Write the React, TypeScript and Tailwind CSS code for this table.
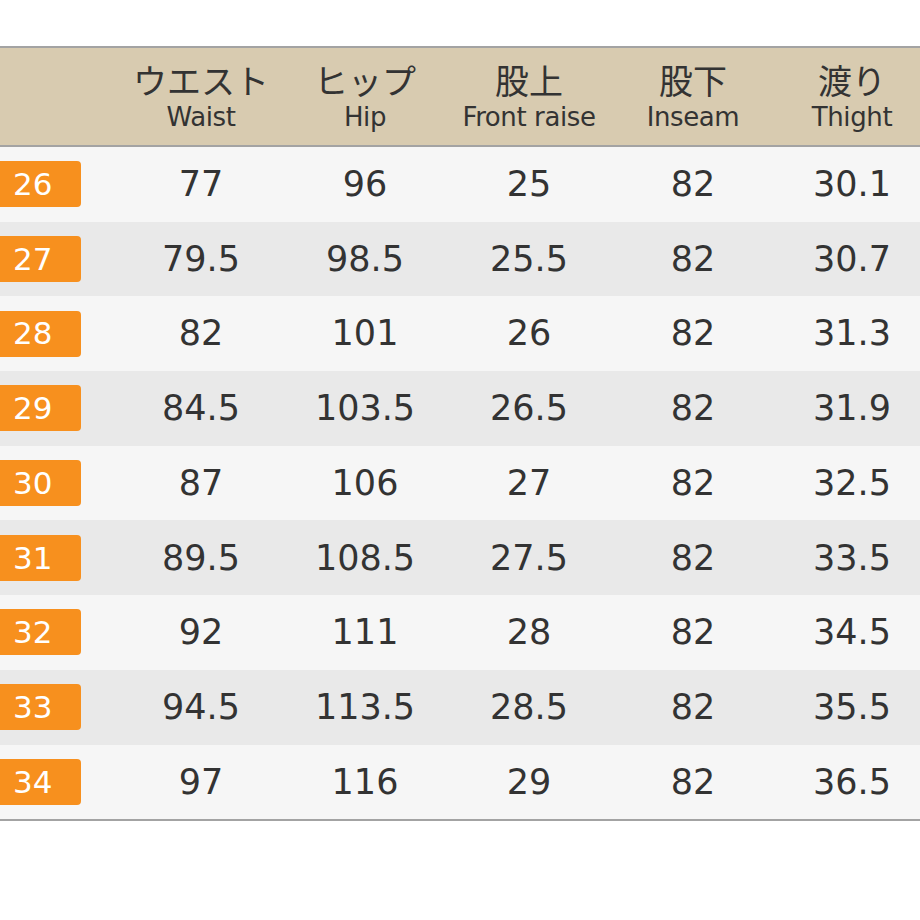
const headers = [
  { ja: 'ウエスト', en: 'Waist' },
  { ja: 'ヒップ', en: 'Hip' },
  { ja: '股上', en: 'Front raise' },
  { ja: '股下', en: 'Inseam' },
  { ja: '渡り', en: 'Thight' },
]

const rows = [
  ['26', '77', '96', '25', '82', '30.1'],
  ['27', '79.5', '98.5', '25.5', '82', '30.7'],
  ['28', '82', '101', '26', '82', '31.3'],
  ['29', '84.5', '103.5', '26.5', '82', '31.9'],
  ['30', '87', '106', '27', '82', '32.5'],
  ['31', '89.5', '108.5', '27.5', '82', '33.5'],
  ['32', '92', '111', '28', '82', '34.5'],
  ['33', '94.5', '113.5', '28.5', '82', '35.5'],
  ['34', '97', '116', '29', '82', '36.5'],
]

const grid = 'grid grid-cols-[119px_164px_164px_164px_164px_154px]'

export default function App() {
  return (
    <div className="h-[920px] w-[920px] overflow-hidden bg-white pt-[46px] font-['DejaVu_Sans','Noto_Sans_CJK_JP',sans-serif] text-[#333]">
      <div className="border-y-2 border-[#a3a3a3]">
        {/* header */}
        <div className={`${grid} h-[99px] border-b-2 border-[#a3a3a3] bg-[#d8cbb0]`}>
          <div />
          {headers.map((h) => (
            <div key={h.en} className="flex flex-col items-center pt-[12px]">
              <span className="font-['Noto_Sans_CJK_JP',sans-serif] text-[34px] leading-[40px]">{h.ja}</span>
              <span className="mt-[2px] whitespace-nowrap text-[26px] leading-[30px] tracking-[-0.4px]">{h.en}</span>
            </div>
          ))}
        </div>

        {/* rows */}
        {rows.map((r, i) => (
          <div
            key={r[0]}
            className={`${grid} h-[74.7px] items-center ${i % 2 === 0 ? 'bg-[#f6f6f6]' : 'bg-[#e9e9e9]'}`}
          >
            <div>
              <div className="flex h-[46px] w-[81px] items-center rounded-r-[4px] bg-[#f7901e] pl-[13px] text-[31px] text-white">
                {r[0]}
              </div>
            </div>
            {r.slice(1).map((v, j) => (
              <div key={j} className="text-center text-[35px]">
                {v}
              </div>
            ))}
          </div>
        ))}
      </div>
    </div>
  )
}
